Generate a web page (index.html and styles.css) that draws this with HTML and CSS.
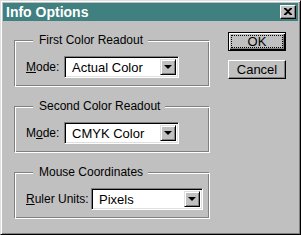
FILE: index.html
```html
<!DOCTYPE html>
<html>
<head>
<meta charset="utf-8">
<link rel="stylesheet" href="styles.css">
</head>
<body>
<div class="window">
  <div class="titlebar">
    <span class="title">Info Options</span>
    <span class="close"><svg width="8" height="7" viewBox="0 0 8 7"><path d="M0 0h2l2 2 2-2h2v1l-3 2.5 3 2.5v1h-2l-2-2-2 2h-2v-1l3-2.5-3-2.5z" fill="#000"/></svg></span>
  </div>
  <div class="main">
    <div class="groups">
      <div class="group">
        <span class="legend">First Color Readout</span>
        <div class="row">
          <span class="label"><u>M</u>ode:</span>
          <div class="combo w1"><span class="value">Actual Color</span><span class="arrow"><i></i></span></div>
        </div>
      </div>
      <div class="group">
        <span class="legend">Second Color Readout</span>
        <div class="row">
          <span class="label">M<u>o</u>de:</span>
          <div class="combo w1"><span class="value">CMYK Color</span><span class="arrow"><i></i></span></div>
        </div>
      </div>
      <div class="group">
        <span class="legend">Mouse Coordinates</span>
        <div class="row">
          <span class="label l3"><u>R</u>uler Units:</span>
          <div class="combo w3"><span class="value">Pixels</span><span class="arrow"><i></i></span></div>
        </div>
      </div>
    </div>
    <div class="buttons">
      <div class="btn default"><span class="focus">OK</span></div>
      <div class="btn"><span>Cancel</span></div>
    </div>
  </div>
</div>
</body>
</html>
```
FILE: styles.css
```css
html, body {
  margin: 0;
  padding: 0;
  background: #c0c0c0;
}
.window {
  width: 301px;
  height: 235px;
  box-sizing: border-box;
  background: #c0c0c0;
  border: 1px solid;
  border-color: #dfdfdf #000 #000 #dfdfdf;
  box-shadow: inset 1px 1px 0 #fff, inset -1px -1px 0 #808080;
  padding: 2px;
  font-family: "Liberation Sans", Arial, sans-serif;
  font-size: 12px;
  color: #000;
}
.titlebar {
  height: 18px;
  background: #408080;
  display: flex;
  align-items: center;
  justify-content: space-between;
  padding: 0 2px 0 3px;
}
.title {
  color: #fff;
  font-weight: bold;
  font-size: 14px;
  line-height: 18px;
}
.close {
  width: 16px;
  height: 14px;
  box-sizing: border-box;
  background: #c0c0c0;
  border: 1px solid;
  border-color: #fff #000 #000 #fff;
  box-shadow: inset -1px -1px 0 #808080;
  display: flex;
  align-items: center;
  justify-content: center;
  padding: 0 1px 1px 0;
}
.close svg { display: block; }
.main {
  display: flex;
  align-items: flex-start;
  padding: 11px 0 0 11px;
}
.groups {
  display: flex;
  flex-direction: column;
  gap: 19px;
  padding-top: 8px;
  width: 196px;
}
.group {
  position: relative;
  height: 47px;
  box-sizing: border-box;
  border: 1px solid;
  border-color: #808080 #fff #fff #808080;
  box-shadow: inset 1px 1px 0 #fff, inset -1px -1px 0 #808080;
  padding: 15px 0 0 11px;
}
.legend {
  position: absolute;
  top: -8px;
  left: 18px;
  padding: 0 5px 0 6px;
  background: #c0c0c0;
  line-height: 15px;
}
.row {
  display: flex;
  align-items: center;
}
.label {
  width: 38px;
}
.label.l3 { width: 65px; }
.combo {
  height: 22px;
  box-sizing: border-box;
  border: 1px solid;
  border-color: #808080 #fff #fff #808080;
  box-shadow: inset 1px 1px 0 #000, inset -1px -1px 0 #dfdfdf;
  background: #fff;
  display: flex;
  align-items: stretch;
  padding: 2px;
}
.w1 { width: 115px; }
.w3 { width: 112px; }
.value {
  flex: 1;
  padding-left: 5px;
  line-height: 18px;
  font-size: 13px;
}
.arrow {
  width: 16px;
  box-sizing: border-box;
  background: #c0c0c0;
  border: 1px solid;
  border-color: #dfdfdf #000 #000 #dfdfdf;
  box-shadow: inset 1px 1px 0 #fff, inset -1px -1px 0 #808080;
  display: flex;
  align-items: center;
  justify-content: center;
}
.arrow i {
  width: 0;
  height: 0;
  border-left: 4px solid transparent;
  border-right: 4px solid transparent;
  border-top: 4px solid #000;
  margin-left: -1px;
}
.buttons {
  display: flex;
  flex-direction: column;
  gap: 9px;
  margin-left: 18px;
}
.btn {
  width: 58px;
  height: 19px;
  box-sizing: border-box;
  border: 1px solid;
  border-color: #fff #000 #000 #fff;
  box-shadow: inset -1px -1px 0 #808080;
  display: flex;
  align-items: center;
  justify-content: center;
  font-size: 13px;
}
.btn.default {
  border: 1px solid #000;
  box-shadow: inset 1px 1px 0 #fff, inset -1px -1px 0 #000, inset -2px -2px 0 #808080;
  padding: 2px;
}
.focus {
  flex: 1;
  align-self: stretch;
  border: 1px dotted #000;
  display: flex;
  align-items: center;
  justify-content: center;
}
```
